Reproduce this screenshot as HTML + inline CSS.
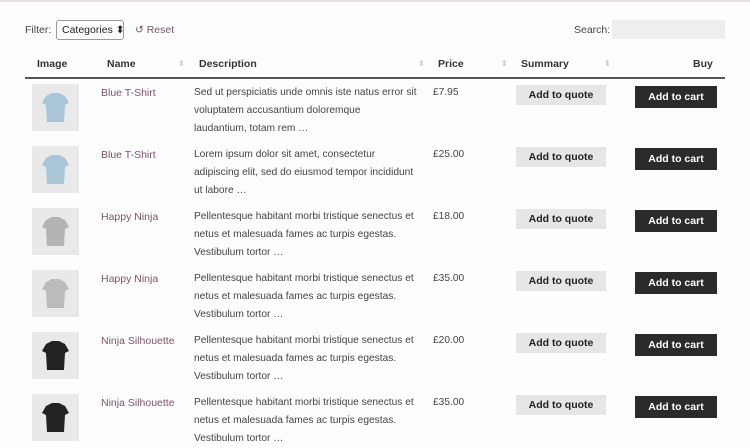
<!DOCTYPE html>
<html><head><style>
body{margin:0;width:750px;height:422px;overflow:hidden;background:#fdfdfd;font-family:"Liberation Sans",sans-serif;color:#444;position:relative}
.a{position:absolute;white-space:nowrap}
.top{position:absolute;left:0;top:0;width:750px;height:2px;background:#e6dfe3}
.h{font-weight:bold;font-size:10.5px;color:#333;top:58px}
.ar{color:#ccc;font-size:8px;top:59px}
.name{color:#7a5468;font-size:10.5px}
.desc{font-size:10.2px;line-height:18px;color:#444}
.price{font-size:10.2px;color:#444}
.q{background:#e6e6e6;color:#222;font-size:10.5px;font-weight:bold;width:90px;height:20px;line-height:20px;text-align:center}
.c{background:#2b2b2b;color:#fff;font-size:10.5px;font-weight:bold;width:82px;height:22px;line-height:22px;text-align:center}
.th{width:47px;height:47px;background:#e9e9e9}
</style></head><body>
<div class="top"></div>
<div class="a" style="left:25px;top:24px;font-size:10.5px">Filter:</div>
<div class="a" style="left:56px;top:20px;height:18px;border:1px solid #999;border-radius:3px;font-size:10.5px;line-height:18px;padding-left:5px;width:61px;color:#222">Categories ⬍</div>
<div class="a" style="left:135px;top:24px;font-size:10.5px;color:#7a5468">↺ Reset</div>
<div class="a" style="left:574px;top:24px;font-size:10.5px">Search:</div>
<div class="a" style="left:612px;top:20px;width:113px;height:19px;background:#eee"></div>
<div class="a h" style="left:37px">Image</div>
<div class="a h" style="left:107px">Name</div><div class="a ar" style="left:178px">⬍</div>
<div class="a h" style="left:199px">Description</div><div class="a ar" style="left:418px">⬍</div>
<div class="a h" style="left:438px">Price</div><div class="a ar" style="left:501px">⬍</div>
<div class="a h" style="left:521px">Summary</div><div class="a ar" style="left:604px">⬍</div>
<div class="a h" style="left:693px">Buy</div>
<div class="a" style="left:25px;top:77px;width:700px;height:2px;background:#555"></div>
<div id="rows"></div>
<script>
var R=[["Blue T-Shirt","Sed ut perspiciatis unde omnis iste natus error sit|voluptatem accusantium doloremque|laudantium, totam rem …","£7.95","#aac4d8"],
["Blue T-Shirt","Lorem ipsum dolor sit amet, consectetur|adipiscing elit, sed do eiusmod tempor incididunt|ut labore …","£25.00","#aac4d8"],
["Happy Ninja","Pellentesque habitant morbi tristique senectus et|netus et malesuada fames ac turpis egestas.|Vestibulum tortor …","£18.00","#b4b4b4"],
["Happy Ninja","Pellentesque habitant morbi tristique senectus et|netus et malesuada fames ac turpis egestas.|Vestibulum tortor …","£35.00","#bbb"],
["Ninja Silhouette","Pellentesque habitant morbi tristique senectus et|netus et malesuada fames ac turpis egestas.|Vestibulum tortor …","£20.00","#222"],
["Ninja Silhouette","Pellentesque habitant morbi tristique senectus et|netus et malesuada fames ac turpis egestas.|Vestibulum tortor …","£35.00","#222"]];
var h="";R.forEach(function(r,i){var y=84+i*62;
h+='<div class="a th" style="left:32px;top:'+y+'px"><svg width="47" height="47"><path d="M14 12 L20 9 L27 9 L33 12 L37 19 L33 21 L32 38 L15 38 L14 21 L10 19 Z" fill="'+r[3]+'"/></svg></div>';
h+='<div class="a name" style="left:101px;top:'+(y+3)+'px">'+r[0]+'</div>';
h+='<div class="a desc" style="left:194px;top:'+y+'px">'+r[1].split("|").join("<br>")+'</div>';
h+='<div class="a price" style="left:433px;top:'+(y+3)+'px">'+r[2]+'</div>';
h+='<div class="a q" style="left:516px;top:'+(y+1)+'px">Add to quote</div>';
h+='<div class="a c" style="left:635px;top:'+(y+2)+'px">Add to cart</div>';});
document.getElementById("rows").innerHTML=h;
</script>
</body></html>
